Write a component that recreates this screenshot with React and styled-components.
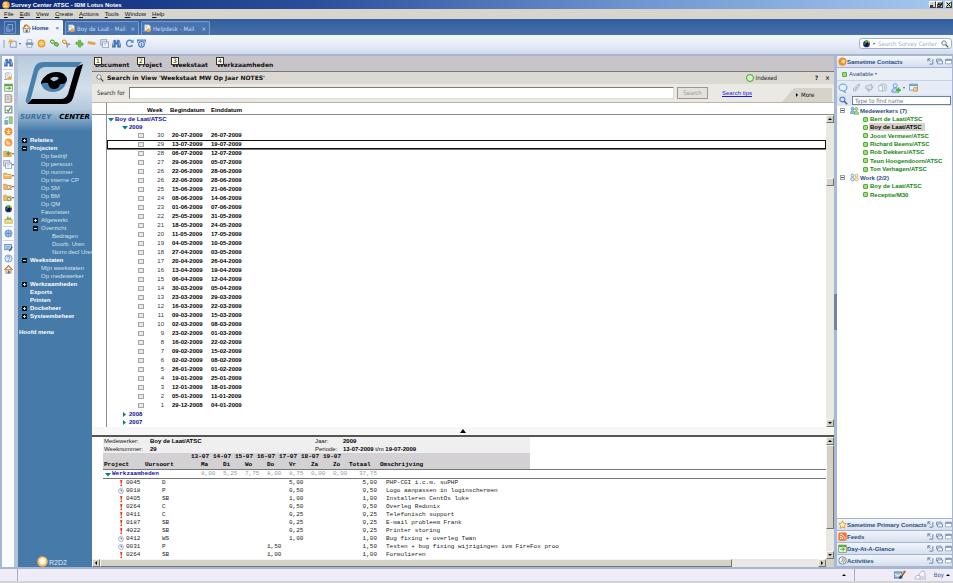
import React from 'react';
import styled, { createGlobalStyle } from 'styled-components';

const GlobalStyle = createGlobalStyle`
  * { box-sizing: border-box; }
  html, body, #root { height: 100%; }
  body {
    margin: 0;
    overflow: hidden;
    font-family: 'DejaVu Sans Condensed', 'DejaVu Sans', sans-serif;
    font-size: 6px;
    line-height: 8px;
    color: #222;
  }
  button, input {
    font: inherit;
    color: inherit;
    margin: 0;
    padding: 0;
    border: 0;
    background: none;
  }
  button { cursor: pointer; white-space: nowrap; }
  a { color: inherit; text-decoration: none; }
  svg { display: block; flex: none; }
  ul { list-style: none; margin: 0; padding: 0; }
  table { border-collapse: collapse; border-spacing: 0; }
  td, th { padding: 0; white-space: nowrap; text-align: left; }
`;

const ARIAL = "'Liberation Sans', Arial, sans-serif";
const MONO = "'Liberation Mono', 'Courier New', monospace";
const WIDE = "'DejaVu Sans', Verdana, sans-serif";

/* ---------- icons ---------- */

const ICONS = {
  notes: (
    <>
      <circle cx="6" cy="6" r="5.6" fill="#f39a1f" />
      <circle cx="5" cy="4.5" r="3" fill="#ffd27a" />
      <path d="M2 8q4 2 8-1" stroke="#fff" strokeWidth="1.2" fill="none" />
    </>
  ),
  window: (
    <>
      <rect x="3" y="1" width="7" height="8" fill="none" stroke="#a9c3e6" />
      <path d="M1 4v7h6" fill="none" stroke="#a9c3e6" />
    </>
  ),
  home: (
    <>
      <path d="M2 6h8v5H2z" fill="#d9e4f4" stroke="#5b7fb5" strokeWidth=".8" />
      <path d="M.5 6.5L6 1l5.5 5.5" fill="none" stroke="#e88a1c" strokeWidth="1.8" />
      <rect x="5" y="7.5" width="2.5" height="3.5" fill="#9a5b20" />
      <path d="M3 1h1.5v3H3z" fill="#b8642c" />
    </>
  ),
  mail: (
    <>
      <path d="M2 1h6l2 2v6H2z" fill="#f5f8fc" stroke="#8ba3c7" strokeWidth=".8" />
      <path d="M3 3h4M3 5h3" stroke="#9bb1d0" strokeWidth=".8" />
      <path d="M7.5 4.500l1.200 2 2.300.5-1.500 1.700.2 2.300-2.200-1-2.200 1 .2-2.300L4 7l2.300-.5z" fill="#f7a823" />
      <path d="M0 10h5" stroke="#7d97c0" />
    </>
  ),
  create: (
    <>
      <path d="M3 3h8v8H3z" fill="#e3ecf9" stroke="#6287bd" strokeWidth="1" />
      <path d="M3.5 0v7M0 3.5h7M1 1l5 5M6 1L1 6" stroke="#f5a623" strokeWidth="1.1" />
    </>
  ),
  print: (
    <>
      <path d="M3 1h6v4H3z" fill="#fff" stroke="#6c84a8" strokeWidth=".8" />
      <rect x="1" y="4.5" width="10" height="4" rx="1" fill="#7f96b9" />
      <path d="M3 7.5h6V11H3z" fill="#fff" stroke="#6c84a8" strokeWidth=".8" />
    </>
  ),
  gear: (
    <>
      <circle cx="6" cy="6" r="4.2" fill="#ffd58a" stroke="#f09a22" strokeWidth="2" />
      <circle cx="6" cy="6" r="1.5" fill="#fff" stroke="#d98618" strokeWidth=".6" />
    </>
  ),
  linkGreen: (
    <>
      <rect x="1" y="1.5" width="5" height="4" rx="1.8" fill="#e2f3d3" stroke="#5d9c3b" strokeWidth="1.4" transform="rotate(30 3 3)" />
      <rect x="5.5" y="5" width="5" height="4" rx="1.8" fill="#9bd070" stroke="#4b9a36" strokeWidth="1.4" transform="rotate(30 8 8)" />
    </>
  ),
  linkOrange: (
    <>
      <rect x="1" y="1.5" width="5" height="4" rx="1.8" fill="#fbe3b6" stroke="#d8902a" strokeWidth="1.2" transform="rotate(30 3 3)" />
      <path d="M5.5 5l5.5 2-3 1-1 3.500z" fill="#f3a63f" stroke="#6f86ab" strokeWidth=".8" />
    </>
  ),
  plus: <path d="M4.500 1.500L8 2v2.500l3 1L10.500 8.500H8L7.500 11 4.500 10.500V8L1 7l.5-3h3z" fill="#6bbd45" stroke="#4b9c33" strokeWidth=".6" />,
  minus: <rect x="1" y="4" width="10" height="3" rx="1" fill="#f0a63a" stroke="#ce9a50" strokeWidth=".6" transform="rotate(8 6 6)" />,
  pages: (
    <>
      <rect x="1" y="1" width="8" height="7" fill="#dfe7f3" stroke="#7c91b4" />
      <rect x="3.5" y="4" width="8" height="7" fill="#fff" stroke="#7c91b4" />
      <path d="M5 6h5M5 8h4" stroke="#96a8c6" strokeWidth=".8" />
    </>
  ),
  bino: (
    <>
      <path d="M2.5 1.500h2.500v3h2v-3h2.500L11.500 8v3H7.500V7h-3v4H.5V8z" fill="#3f74bd" stroke="#2a579b" strokeWidth=".6" />
      <path d="M2.5 4L1.500 9M9 4l1.500 5" stroke="#b8d3f2" strokeWidth="1" />
    </>
  ),
  refresh: (
    <>
      <path d="M10 8a4.300 4.300 0 1 1-.5-5" fill="none" stroke="#5589cd" strokeWidth="2" />
      <path d="M7 5h4.500V.5z" fill="#5589cd" />
    </>
  ),
  world: (
    <>
      <circle cx="6" cy="6" r="4.800" fill="#a9c6ec" stroke="#5f8bc8" strokeWidth="1" />
      <path d="M1.500 6h9M6 1.500v9M3 2.500q3 3.500 0 7M9 2.500q-3 3.500 0 7" fill="none" stroke="#4d7fc4" strokeWidth=".7" />
    </>
  ),
  help: (
    <>
      <circle cx="6" cy="6" r="4.800" fill="#dceafa" stroke="#6f9bd4" strokeWidth="1.200" />
      <path d="M4.500 4.500q0-1.500 1.500-1.500t1.500 1.500T6 7M6 8.200v1.200" fill="none" stroke="#4d7fc4" strokeWidth="1.200" />
    </>
  ),
  replace: (
    <>
      <path d="M0 1.500h12M1 1v4M11 1v4" stroke="#4d7fc4" strokeWidth="1.400" />
      <circle cx="6" cy="7" r="3.800" fill="#d8e7f8" stroke="#4478be" strokeWidth="1.400" />
      <path d="M6 5v4M4.500 7.500L6 9l1.500-1.500" stroke="#4478be" fill="none" />
    </>
  ),
  calendar: (
    <>
      <rect x="1" y="1.500" width="10" height="9.500" fill="#f4faf0" stroke="#5b8f4c" />
      <rect x="1" y="1.500" width="10" height="2.800" fill="#5fa548" />
      <path d="M3 7h5M6 5l3 2-3 2" stroke="#4c9a38" strokeWidth="1.300" fill="none" />
    </>
  ),
  book: (
    <>
      <rect x="1.500" y="1" width="8" height="10" fill="#e4e2dc" stroke="#84827c" />
      <path d="M3.500 3.500h4M3.500 5.500h4M3.500 7.500h4" stroke="#8d9bb0" strokeWidth=".8" />
      <path d="M10.500 2v2M10.500 5v2M10.500 8v2" stroke="#c98d36" strokeWidth="1.400" />
    </>
  ),
  todo: (
    <>
      <rect x="1.500" y="1.500" width="9" height="9" fill="#fff" stroke="#5b6f8d" strokeWidth="1.200" />
      <path d="M3.500 6l2 2.500L9 3.500" fill="none" stroke="#45a030" strokeWidth="1.600" />
    </>
  ),
  replicate: (
    <>
      <path d="M1 6h4v5H1z" fill="#77b4ea" stroke="#4380bd" strokeWidth=".7" />
      <path d="M7 1h4v9H7z" fill="#a2d584" stroke="#52953a" strokeWidth=".7" />
      <path d="M2 4q0-3 4-2.500" fill="none" stroke="#4380bd" />
    </>
  ),
  people: (
    <>
      <circle cx="6" cy="6" r="5.300" fill="#f3922b" />
      <path d="M6 3v6M3 5l3 1.500L9 5M4 9.500l2-2.500 2 2.500" stroke="#ffe9cf" strokeWidth="1.200" fill="none" />
    </>
  ),
  pencilBall: (
    <>
      <circle cx="6" cy="6" r="5.300" fill="#f5a042" />
      <path d="M3 3.500l5 5M3 6l3 3" stroke="#ffe9cf" strokeWidth="1.400" />
    </>
  ),
  folder: (
    <>
      <path d="M1 3h4l1 1.500h5V10H1z" fill="#f3b95b" stroke="#c58c2e" strokeWidth=".8" />
      <path d="M1.500 6h9" stroke="#fde2ad" />
    </>
  ),
  folderGreen: (
    <>
      <path d="M1 3h4l1 1.500h5V10H1z" fill="#f3b95b" stroke="#c58c2e" strokeWidth=".8" />
      <path d="M7 3v6M4.500 6h5" stroke="#4ba437" strokeWidth="2" />
    </>
  ),
  folderUser: (
    <>
      <path d="M1 3h4l1 1.500h5V10H1z" fill="#f3b95b" stroke="#c58c2e" strokeWidth=".8" />
      <circle cx="7.500" cy="7" r="2" fill="#fff" stroke="#777" strokeWidth=".8" />
    </>
  ),
  folderSync: (
    <>
      <path d="M1 3h4l1 1.500h5V10H1z" fill="#f3b95b" stroke="#c58c2e" strokeWidth=".8" />
      <circle cx="8" cy="8" r="2.500" fill="#bfe3a4" stroke="#4f9c3a" strokeWidth=".9" />
    </>
  ),
  ball: (
    <>
      <circle cx="6" cy="6.500" r="4.500" fill="#1c2f86" />
      <path d="M2 9q5 2 8-4l-2-2z" fill="#15161c" />
      <path d="M3 3l4-2 1 3-3 2z" fill="#4fb637" />
      <path d="M8 1.500l3 3-2.500 1z" fill="#f0c21c" />
      <path d="M2 5l3 1-2 3z" fill="#2f60d0" />
      <path d="M8.500 6l2 .5-1.500 2z" fill="#e14b2c" />
    </>
  ),
  tray: (
    <>
      <path d="M1 6h10v5H1z" fill="#f3e17c" stroke="#a8953a" strokeWidth=".8" />
      <path d="M3 6l2-4 2 3 2-2v3" fill="#7eb55d" stroke="#5b8c40" strokeWidth=".6" />
    </>
  ),
  edit: (
    <>
      <rect x="1" y="2" width="9" height="7" fill="#bcd5f2" stroke="#4f79b5" />
      <path d="M3 5h5M3 7h3" stroke="#4f79b5" strokeWidth=".8" />
      <path d="M11 5l-4 6" stroke="#444" strokeWidth="1.500" />
    </>
  ),
  write: (
    <>
      <rect x="0" y="3" width="8" height="6" fill="#9cc1ec" stroke="#4f79b5" />
      <path d="M1 5l3 2 3-2" fill="none" stroke="#fff" />
      <path d="M11 2L5.500 9.500" stroke="#3b342a" strokeWidth="2" />
      <path d="M10.500 2L7 6.500" stroke="#e0a53c" strokeWidth="1.300" />
    </>
  ),
  house: (
    <>
      <path d="M2.500 6h7v5h-7z" fill="#f6e2bf" stroke="#96683a" strokeWidth=".8" />
      <path d="M.5 6.500L6 1l5.500 5.500" fill="none" stroke="#c4702a" strokeWidth="1.600" />
      <rect x="5" y="7.500" width="2.500" height="3.500" fill="#3e68a8" />
    </>
  ),
  search: (
    <>
      <circle cx="4.500" cy="4.500" r="3.300" fill="#f4f8fd" stroke="#666" strokeWidth="1.200" />
      <path d="M7 7l4 4" stroke="#444" strokeWidth="1.800" />
    </>
  ),
  searchBlue: (
    <>
      <circle cx="4.500" cy="4.500" r="3.300" fill="#cfe4fa" stroke="#4c7db8" strokeWidth="1.400" />
      <path d="M7 7l4 4" stroke="#3c5f94" strokeWidth="2" />
    </>
  ),
  sametime: (
    <>
      <circle cx="6" cy="6" r="5.500" fill="#f58a1f" />
      <circle cx="7" cy="6" r="2.600" fill="#ffd9a8" />
      <path d="M1 10l1.500-3 2 2z" fill="#f58a1f" />
    </>
  ),
  chat: <path d="M6 1.200c6 0 6 7.800 1.500 7.800L9 11.500 5 9C-.5 9 0 1.200 6 1.200z" fill="#e4f0fc" stroke="#5b92cf" strokeWidth="1.200" />,
  clip: <path d="M9 3L4 8q-1 1.500.5 1.500L10 4q1-3-2-2.500L2 7.500Q1 11 4 11l4-3.500" fill="none" stroke="#a5aebb" strokeWidth="1.100" />,
  horn: <path d="M1 4.500L9 1.500v7.500L1 7.500zM3 8l1 3h2l-1-2.500M10.500 4v3" fill="#dde2ea" stroke="#9ea9ba" strokeWidth="1" />,
  card: (
    <>
      <rect x="3" y="1.500" width="8" height="9" rx="2" fill="#e8ecf3" stroke="#9fadc3" />
      <path d="M1 3.500h5v7H1z" fill="#f7f9fc" stroke="#9fadc3" />
      <path d="M8.500 3.500v5" stroke="#9fadc3" />
    </>
  ),
  userAdd: (
    <>
      <circle cx="5" cy="3.200" r="2.400" fill="#dcebfb" stroke="#5b92cf" />
      <path d="M1 11q0-5 4-5t4 5z" fill="#b7d5f4" stroke="#5b92cf" />
      <path d="M9 5.500v6M6 8.500h6" stroke="#4fae37" strokeWidth="2" />
    </>
  ),
  sheet: (
    <>
      <rect x="1" y="1.500" width="10" height="8" fill="#f3f7fc" stroke="#5e83b9" />
      <path d="M1 3h10" stroke="#5e83b9" strokeWidth="1.600" />
      <path d="M6 6h5v5H6z" fill="#f6cc77" stroke="#b98b35" strokeWidth=".8" />
    </>
  ),
  group: (
    <>
      <circle cx="3.500" cy="3.500" r="2" fill="#8fc0ee" stroke="#3d78bd" strokeWidth=".7" />
      <path d="M.5 10q0-4 3-4t3 4z" fill="#8fc0ee" stroke="#3d78bd" strokeWidth=".7" />
      <circle cx="8.500" cy="4" r="2" fill="#a9dd8b" stroke="#4c9a38" strokeWidth=".7" />
      <path d="M5.500 11q0-4 3-4t3 4z" fill="#a9dd8b" stroke="#4c9a38" strokeWidth=".7" />
    </>
  ),
  groupWork: (
    <>
      <circle cx="3.300" cy="3.500" r="2" fill="#e3f0fc" stroke="#4a84c8" strokeWidth=".9" />
      <rect x="1" y="6.200" width="4.500" height="4.300" rx="2" fill="#e3f0fc" stroke="#4a84c8" strokeWidth=".9" />
      <circle cx="8.700" cy="3.500" r="2" fill="#fdeccb" stroke="#e0982c" strokeWidth=".9" />
      <rect x="6.500" y="6.200" width="4.500" height="4.300" rx="2" fill="#fdeccb" stroke="#e0982c" strokeWidth=".9" />
    </>
  ),
  star: <path d="M6 1l1.500 3.300 3.500.5-2.600 2.500.7 3.700L6 9.200 2.900 11l.7-3.700L1 4.800l3.500-.5z" fill="#fdf0c8" stroke="#e79a25" strokeWidth="1.200" />,
  feed: (
    <>
      <rect x=".5" y=".5" width="11" height="11" rx="1.500" fill="#f0742a" />
      <circle cx="3.500" cy="8.700" r="1.100" fill="#fff" />
      <path d="M2.500 5.500a4 4 0 0 1 4 4M2.500 2.800a7 7 0 0 1 7 7" fill="none" stroke="#fff" strokeWidth="1.200" />
    </>
  ),
  activity: (
    <>
      <circle cx="6" cy="6" r="5" fill="#eaf3fd" stroke="#4b86cc" strokeWidth="1.200" />
      <path d="M6 6V2.500a3.500 3.500 0 0 1 1 6.500z" fill="#f6c343" stroke="#c9922a" strokeWidth=".6" />
      <path d="M6 6L3.500 8.500" stroke="#4b86cc" />
    </>
  ),
  undock: <path d="M1.500 6V1.500H6M1.500 1.500l4.500 4.500M4 10.500h6V2" fill="none" stroke="#53709c" strokeWidth="1.400" />,
  stack: (
    <>
      <path d="M1 2h8v5H1z" fill="#e7eef9" stroke="#53709c" strokeWidth="1.200" />
      <path d="M3 5h8v5H3z" fill="#fff" stroke="#53709c" strokeWidth="1.200" />
    </>
  ),
  panel: (
    <>
      <path d="M1 2h10v8H1z" fill="#fff" stroke="#7a97c3" strokeWidth="1.200" />
      <path d="M1 3.500h10" stroke="#53709c" strokeWidth="2" />
    </>
  ),
  clock: (
    <>
      <circle cx="6" cy="6" r="5" fill="#f1f4fa" stroke="#8f99b3" strokeWidth="1.300" />
      <path d="M6 2.500V6h2.500" fill="none" stroke="#44547c" strokeWidth="1.300" />
    </>
  ),
  alert: <path d="M4.500 0h4L7.500 7.500h-2zM5 9h3v3H5z" fill="#ec2a15" />,
  server: (
    <>
      <circle cx="6" cy="6" r="5.700" fill="#f7b758" />
      <circle cx="6" cy="5.500" r="4" fill="#fde3b4" />
      <path d="M6 2l3 3.500H8V9H4V5.500H3z" fill="#fff" />
    </>
  ),
  cloud: (
    <>
      <path d="M5 8V5l3-3h2l1 3v3z" fill="#f7f7fa" stroke="#b9bdc9" strokeWidth="1" />
      <path d="M1 10V8l2-1.500h3V10z" fill="#f7f7fa" stroke="#b9bdc9" strokeWidth="1" />
      <path d="M6 10h6V8" fill="none" stroke="#b9bdc9" />
    </>
  ),
};

const Icon = ({ name, size = 9 }) => (
  <svg width={size} height={size} viewBox="0 0 12 12" aria-hidden="true">{ICONS[name]}</svg>
);

const Twisty = ({ open }) => (
  <svg width="6" height="5" viewBox="0 0 6 5" aria-hidden="true">
    <path d={open ? 'M0 1h6L3 4.500z' : 'M1 0v5l3-2.500z'} fill="#087f7b" />
  </svg>
);

const Caret = styled.span`
  width: 0;
  height: 0;
  border: 1px solid transparent;
  border-top: 2px solid #44597e;
  border-bottom: 0;
`;

/* ---------- window frame ---------- */

const Window = styled.div`
  display: flex;
  flex-direction: column;
  height: 100vh;
  background: #efedf8;
`;

const TitleBar = styled.header`
  display: flex;
  align-items: center;
  height: 9px;
  padding: 0 1px 0 2px;
  background: linear-gradient(90deg, #0c2a78, #2b4f9c 33%, #6f96d0 67%, #a6caf0);
  color: #fff;
`;

const TitleText = styled.h1`
  flex: 1;
  margin: 0 0 0 1px;
  font: bold 6px/8px ${ARIAL};
`;

const WindowButton = styled.button`
  width: 7px;
  height: 7px;
  border: 1px solid;
  border-color: #fff #404040 #404040 #fff;
  background: #d4d0c8;
  color: #000;
  display: grid;
  place-items: center;
  margin-left: ${(p) => (p.$gap ? '2px' : 0)};
`;

const MenuBar = styled.nav`
  display: flex;
  align-items: center;
  gap: 6px;
  height: 10px;
  padding-left: 4px;
  background: #d8d5cd;
  font-family: ${ARIAL};
  color: #111;
`;

const TabBar = styled.nav`
  display: flex;
  align-items: flex-end;
  gap: 2px;
  height: 16px;
  padding-left: 4px;
  background: linear-gradient(#335c9b, #4470ac);
`;

const WindowTab = styled.button`
  width: 12px;
  height: 13px;
  margin: 0 2px 1px 0;
  border: 1px solid #6f92c4;
  display: grid;
  place-items: center;
`;

const Tab = styled.div`
  display: flex;
  align-items: center;
  justify-content: space-between;
  width: ${(p) => p.$width}px;
  height: ${(p) => (p.$active ? 15 : 14)}px;
  padding: 0 3px 0 1px;
  border-radius: 2px 2px 0 0;
  border: 1px solid ${(p) => (p.$active ? '#f4f7fc' : '#7b9bcb')};
  border-bottom: 0;
  background: ${(p) => (p.$active ? '#f0f4fb' : '#4a74b0')};
  color: ${(p) => (p.$active ? '#1e3f78' : '#c9daf2')};
  font-family: ${(p) => (p.$active ? ARIAL : 'inherit')};
  font-weight: ${(p) => (p.$active ? 'bold' : 'normal')};
`;

const TabButton = styled.button`
  display: flex;
  align-items: center;
  gap: 1px;
`;

const TabClose = styled.button`
  font-weight: normal;
`;

const ToolBar = styled.div`
  display: flex;
  align-items: center;
  height: 19px;
  padding: 0 1px 2px 3px;
  background: linear-gradient(#f4f7fc, #e3e9f5 60%, #d3dcec);
`;

const Grip = styled.span`
  width: 2px;
  height: 8px;
  margin-right: 3px;
  background: #b9c5dc;
`;

const ToolGroup = styled.div`
  display: flex;
  align-items: center;
  justify-content: space-between;
  width: 121px;
  margin-left: 4px;
`;

const IconButton = styled.button`
  display: flex;
  align-items: center;
  gap: 2px;
`;

const GlobalSearch = styled.form`
  display: flex;
  align-items: center;
  gap: 3px;
  width: 93px;
  height: 11px;
  margin-left: auto;
  padding: 0 2px;
  border: 1px solid #9fb0cf;
  border-radius: 3px;
  background: #fff;

  input {
    flex: 1;
    min-width: 0;
    outline: none;
  }
  input::placeholder { color: #a9adb5; }
`;

const Body = styled.div`
  flex: 1;
  min-height: 0;
  display: flex;
  border: solid #a8b6cf;
  border-width: 2px 1px 2px 2px;
`;

/* ---------- left side ---------- */

const Rail = styled.nav`
  display: flex;
  flex-direction: column;
  gap: 2px;
  width: 16px;
  padding: 2px 0 0 1px;
  background: #fbfcfe;
  border-right: 4px solid #b4c2da;
`;

const RailButton = styled.button`
  display: flex;
  align-items: center;
  height: 9px;
  margin-left: ${(p) => (p.$menu ? 0 : '1px')};
`;

const RailRule = styled.hr`
  width: 10px;
  height: 1px;
  margin: 0;
  border: 0;
  background: #c9d3e4;
`;

const Sidebar = styled.aside`
  display: flex;
  flex-direction: column;
  width: 74px;
  overflow: hidden;
  background: #457aa9;
  color: #e4edf5;
  font-family: ${ARIAL};
`;

const Brand = styled.div`
  height: 80px;
  padding-top: 5px;
  background: linear-gradient(#b9cbdc, #d3dfea 40%, #b4cadd 66%, #457aa9 94%);

  svg { margin: 0 auto; }
`;

const BrandName = styled.div`
  display: flex;
  justify-content: space-between;
  padding: 0 2px;
  font: italic bold 7px/10px ${WIDE};
  color: #000;

  span:first-child { color: #39719f; }
`;

const TreeItem = styled.li`
  display: flex;
  align-items: center;
  height: 8px;
  padding-left: ${(p) => 4 + p.$level * 11}px;
  white-space: nowrap;
  font-weight: ${(p) => (p.$level === 0 ? 'bold' : 'normal')};
  color: ${(p) => (p.$level === 0 ? '#fff' : '#d5e2ee')};
`;

const Expander = styled.button`
  flex: none;
  width: 5px;
  height: 5px;
  margin-right: 3px;
  visibility: ${(p) => (p.$shown ? 'visible' : 'hidden')};
  background:
    linear-gradient(#c8d6e4, #c8d6e4) center / 3px 1px no-repeat,
    ${(p) => (p.$open ? '' : 'linear-gradient(#c8d6e4, #c8d6e4) center / 1px 3px no-repeat,')}
    #111;
`;

const MainMenuLink = styled.a`
  margin: 8px 0 0 1px;
  color: #fff;
  font-weight: bold;
`;

const Server = styled.div`
  display: flex;
  align-items: flex-end;
  gap: 1px;
  margin-top: auto;
  padding-left: 19px;
  font-size: 7px;
`;

/* ---------- main area ---------- */

const Main = styled.main`
  flex: 1;
  min-width: 0;
  display: flex;
  flex-direction: column;
  background: #fff;
`;

const ActionBar = styled.div`
  display: flex;
  gap: 9px;
  height: 16px;
  padding: 4px 0 0 3px;
  background: #c7c5c8;
  border-bottom: 1px solid #777;
`;

const Action = styled.button`
  position: relative;
  height: 9px;
  width: ${(p) => p.$width}px;
  text-align: left;
  font-family: ${WIDE};
  font-weight: bold;
  color: #111;
`;

const KeyTip = styled.span`
  position: absolute;
  left: -1px;
  top: -3px;
  width: 8px;
  height: 8px;
  border: 1px solid #333;
  background: #ffffe1;
  color: #222;
  font-weight: normal;
  line-height: 6px;
  text-align: center;
`;

const SearchTitle = styled.div`
  display: flex;
  align-items: center;
  height: 12px;
  padding: 0 4px;
  background: #dbd9d2;
  color: #111;

  h2 {
    flex: 1;
    margin: 0 0 0 3px;
    font: bold 6px/8px ${WIDE};
  }
`;

const Indexed = styled.span`
  display: flex;
  align-items: center;
  gap: 2px;
  margin-right: 37px;

  &::before {
    content: '';
    width: 6px;
    height: 6px;
    border: 1px solid #3ca52a;
    border-radius: 50%;
    background: #d5f5c6;
  }
`;

const TitleAction = styled.button`
  width: 5px;
  margin-left: 6px;
  font-weight: bold;
`;

const SearchRow = styled.form`
  display: flex;
  align-items: center;
  height: 19px;
  padding: 0 2px 0 5px;
  background: #ebe9e4;
  border-bottom: 1px solid #b9b5aa;

  input {
    flex: 1;
    min-width: 0;
    height: 12px;
    margin-left: 4px;
    border: 1px solid #7d7b75;
    border-right-color: #ddd;
    border-bottom-color: #ddd;
    background: #fff;
  }
  a {
    width: 60px;
    color: #1a1ae0;
    font-family: ${ARIAL};
    text-decoration: underline;
  }
`;

const SearchButton = styled.button`
  width: 31px;
  height: 12px;
  margin: 0 14px 0 3px;
  border: 1px solid #9b988f;
  background: #e4e2db;
  color: #9a978f;
`;

const More = styled.button`
  align-self: flex-end;
  display: flex;
  align-items: center;
  gap: 2px;
  width: 50px;
  height: 14px;
  padding-left: 13px;
  background: #d6d3cb;
  clip-path: polygon(12px 0, 100% 0, 100% 100%, 0 100%);
  color: #111;
`;

const ViewPane = styled.section`
  flex: 1;
  min-height: 0;
  display: flex;
  flex-direction: column;
  font-family: ${ARIAL};
`;

const ViewHead = styled.div`
  display: flex;
  height: 12px;
  border-bottom: 1px solid #8b8b8b;
`;

const Gutter = styled.div`
  width: 15px;
  border-right: 1px solid #8b8b8b;
`;

const PaneScroll = styled.div`
  flex: 1;
  min-height: 0;
  display: flex;
`;

const Clip = styled.div`
  flex: 1;
  min-width: 0;
  overflow: hidden;
`;

const WeekTable = styled.table`
  width: 100%;
  table-layout: fixed;
  color: #000;

  th { padding: 2px 0 0; height: 11px; line-height: 8px; }
`;

const HeadCell = styled.th`
  && { padding-left: ${(p) => p.$pad || 0}px; }
`;

const WeekRow = styled.tr`
  font-weight: bold;
  outline: ${(p) => (p.$selected ? '1px solid #111' : 'none')};
  outline-offset: -1px;
  box-shadow: ${(p) => (p.$selected ? '0 1px 0 #777' : 'none')};

  td { height: 9px; line-height: 9px; }
  td:nth-child(2) { text-align: right; font-weight: normal; color: #333; }
  td:nth-child(3) { padding-left: 8px; }
`;

const DocMark = styled.span`
  display: block;
  width: 6px;
  height: 5px;
  margin-left: 31px;
  border: 1px solid #a5a5a5;
  background: #e9e9e9;
`;

const Category = styled.button`
  display: flex;
  align-items: center;
  gap: 1px;
  height: 8px;
  padding-left: ${(p) => p.$indent}px;
  font-weight: bold;
  color: #1010a0;
`;

const ScrollTrack = styled.div`
  display: flex;
  flex-direction: ${(p) => (p.$horizontal ? 'row' : 'column')};
  ${(p) => (p.$horizontal ? 'height: 8px; flex: 1;' : 'width: 8px;')}
  background: #e9e8e4;
`;

const ScrollPart = styled.span`
  flex: ${(p) => p.$grow || 'none'};
  width: ${(p) => (p.$grow && p.$wide ? 'auto' : '8px')};
  min-height: 8px;
  border: 1px solid;
  border-color: #f7f6f3 #77746d #77746d #f7f6f3;
  background: #d4d1c9;
  display: grid;
  place-items: center;
`;

const Space = styled.span`
  flex: ${(p) => p.$grow};
`;

const PreviewHandle = styled.button`
  display: grid;
  place-items: center;
  width: 100%;
  height: 10px;
  background: #f7f7f7;
  border-bottom: 2px solid #555;
`;

const Preview = styled.section`
  display: flex;
  flex-direction: column;
  height: 130px;
`;

const Facts = styled.dl`
  display: grid;
  grid-template-columns: 46px 165px 28px 1fr;
  width: 427px;
  margin: 0 0 0 11px;
  padding-left: 1px;
  background: #efefef;
  font-family: ${ARIAL};
  color: #222;

  dd { margin: 0; font-weight: bold; color: #000; }
  dd span { font-weight: normal; }
`;

const HourTable = styled.table`
  width: calc(100% - 11px);
  margin-left: 11px;
  table-layout: fixed;
  font-family: ${MONO};
  color: #222;

  th, td { height: 8px; line-height: 8px; }
  thead th { background: #d3d1d4; color: #000; }
  thead th:last-child { background: #fff; }
`;

const HourHead = styled.th`
  padding-left: ${(p) => p.$pad || 0}px;
`;

const HourCell = styled.td`
  padding-left: ${(p) => p.$pad || 0}px;
  text-align: ${(p) => (p.$right ? 'right' : 'left')};
`;

const SumRow = styled.tr`
  border-top: 1px solid #777;
  border-bottom: 1px solid #777;
  color: #999;
`;

const ProjectCell = styled.span`
  display: flex;
  align-items: center;
  gap: 2px;
  padding-left: 15px;
`;

const BottomScroll = styled.div`
  display: flex;
  height: 8px;
  background: #d4d1c9;
`;

const Corner = styled.div`
  width: 8px;
`;

const Splitter = styled.div`
  display: flex;
  flex-direction: column;
  width: 3px;
  background: #a9b8d5;
`;

const SplitGrip = styled.span`
  height: 36px;
  background: #73829f;
`;

/* ---------- contacts ---------- */

const Contacts = styled.aside`
  display: flex;
  flex-direction: column;
  width: 115px;
  background: #fff;
  color: #2a4d80;
  font-family: ${ARIAL};
`;

const PanelHead = styled.div`
  display: flex;
  align-items: center;
  height: 12px;
  padding: 0 0 0 1px;
  border-bottom: 1px solid #a4b5d3;
  background: linear-gradient(#f2f5fb, #d7dfee);
  white-space: nowrap;
  font-weight: bold;

  h3 { flex: 1; margin: 0; font-size: 6px; line-height: 8px; }
`;

const PanelTools = styled.span`
  display: flex;
  gap: 2px;
`;

const StatusMenu = styled.button`
  display: flex;
  align-items: center;
  gap: 2px;
  height: 12px;
  padding-left: 5px;
  background: #e9eef7;
`;

const Dot = styled.span`
  flex: none;
  width: 5px;
  height: 5px;
  border: 1px solid #55ad38;
  border-radius: 1px;
  background: #9be07b;
`;

const ContactTools = styled.div`
  display: flex;
  align-items: center;
  gap: 4px;
  height: 14px;
  padding-left: 1px;
  border-top: 1px solid #c6d1e4;
  background: #e6ecf6;
`;

const FindRow = styled.div`
  display: flex;
  align-items: center;
  gap: 4px;
  height: 12px;
  padding: 0 1px 0 2px;
  background: #dfe6f2;
  font-family: 'DejaVu Sans Condensed', 'DejaVu Sans', sans-serif;

  input {
    flex: 1;
    min-width: 0;
    height: 9px;
    padding-left: 2px;
    border: 1px solid #6d7f9d;
    background: #fff;
  }
  input::placeholder { color: #6d7887; }
`;

const ContactTree = styled.ul`
  display: grid;
  grid-auto-rows: 1fr;
  height: 93px;
  font-weight: bold;
`;

const ContactGroup = styled.li`
  display: flex;
  align-items: center;
  gap: 1px;
  padding-left: 3px;
  white-space: nowrap;
`;

const Fold = styled.button`
  width: 5px;
  height: 5px;
  margin-right: 4px;
  border: 1px solid #9aa3b3;
  background: linear-gradient(#555, #555) center / 3px 1px no-repeat;
`;

const Contact = styled.li`
  display: flex;
  align-items: center;
  gap: 1px;
  padding-left: 26px;
  white-space: nowrap;
  color: #14860c;

  a {
    padding: 0 3px 0 1px;
    line-height: 8px;
    background: ${(p) => (p.$selected ? '#d4d1c9' : 'none')};
    color: ${(p) => (p.$selected ? '#000' : 'inherit')};
  }
`;

const PanelStack = styled.div`
  margin-top: auto;
  border-top: 1px solid #a4b5d3;
`;

const StatusBar = styled.footer`
  display: flex;
  align-items: center;
  justify-content: flex-end;
  gap: 8px;
  height: 14px;
  padding-right: 3px;
  background: #efecf8;
  border-bottom: 2px solid #d3d3d3;
  color: #34568c;
`;

const StatusRule = styled.span`
  width: 1px;
  height: 12px;
  margin-right: ${(p) => (p.$left ? 'auto' : '31px')};
  margin-left: ${(p) => (p.$left ? '17px' : 0)};
  background: #a9adbd;
`;

/* ---------- data ---------- */

const menus = ['File', 'Edit', 'View', 'Create', 'Actions', 'Tools', 'Window', 'Help'];

const tools = ['print', 'gear', 'linkGreen', 'linkOrange', 'plus', 'minus', 'pages', 'bino', 'refresh', 'replace'];

const rail = [
  ['mail'], ['calendar'], ['book'], ['todo'], ['replicate'], ['people'], ['pencilBall'],
  ['folderGreen', true], ['pages', true], ['folder', true], ['folderUser', true],
  ['folderSync', true], ['ball'], ['tray'],
];

// [level, label, expander state]
const tree = [
  [0, 'Relaties', 'closed'],
  [0, 'Projecten', 'open'],
  [1, 'Op bedrijf'],
  [1, 'Op persoon'],
  [1, 'Op nummer'],
  [1, 'Op interne CP'],
  [1, 'Op SM'],
  [1, 'Op BM'],
  [1, 'Op QM'],
  [1, 'Favorieten'],
  [1, 'Afgewerkt', 'closed'],
  [1, 'Overzicht', 'open'],
  [2, 'Bedragen'],
  [2, 'Doorb. Uren'],
  [2, 'Norm decl Uren'],
  [0, 'Weekstaten', 'open'],
  [1, 'Mijn weekstaten'],
  [1, 'Op medewerker'],
  [0, 'Werkzaamheden', 'closed'],
  [0, 'Exports'],
  [0, 'Printen'],
  [0, 'Docbeheer', 'closed'],
  [0, 'Systeembeheer', 'closed'],
];

const actions = [['Document', 34], ['Project', 25], ['Weekstaat', 36], ['Werkzaamheden', 56]];

const weeks = [
  [30, '20-07-2009', '26-07-2009'],
  [29, '13-07-2009', '19-07-2009'],
  [28, '06-07-2009', '12-07-2009'],
  [27, '29-06-2009', '05-07-2009'],
  [26, '22-06-2009', '28-06-2009'],
  [26, '22-06-2009', '28-06-2009'],
  [25, '15-06-2009', '21-06-2009'],
  [24, '08-06-2009', '14-06-2009'],
  [23, '01-06-2009', '07-06-2009'],
  [22, '25-05-2009', '31-05-2009'],
  [21, '18-05-2009', '24-05-2009'],
  [20, '11-05-2009', '17-05-2009'],
  [19, '04-05-2009', '10-05-2009'],
  [18, '27-04-2009', '03-05-2009'],
  [17, '20-04-2009', '26-04-2009'],
  [16, '13-04-2009', '19-04-2009'],
  [15, '06-04-2009', '12-04-2009'],
  [14, '30-03-2009', '05-04-2009'],
  [13, '23-03-2009', '29-03-2009'],
  [12, '16-03-2009', '22-03-2009'],
  [11, '09-03-2009', '15-03-2009'],
  [10, '02-03-2009', '08-03-2009'],
  [9, '23-02-2009', '01-03-2009'],
  [8, '16-02-2009', '22-02-2009'],
  [7, '09-02-2009', '15-02-2009'],
  [6, '02-02-2009', '08-02-2009'],
  [5, '26-01-2009', '01-02-2009'],
  [4, '19-01-2009', '25-01-2009'],
  [3, '12-01-2009', '18-01-2009'],
  [2, '05-01-2009', '11-01-2009'],
  [1, '29-12-2008', '04-01-2009'],
];

const days = [
  ['13-07', 'Ma', '8,00'],
  ['14-07', 'Di', '5,25'],
  ['15-07', 'Wo', '7,75'],
  ['16-07', 'Do', '8,00'],
  ['17-07', 'Vr', '8,75'],
  ['18-07', 'Za', '0,00'],
  ['19-07', 'Zo', '0,00'],
];

// [icon, project, type, day index, hours, description]
const hours = [
  ['alert', '0045', 'D', 4, '5,00', 'PHP-CGI i.c.m. suPHP'],
  ['clock', '0018', 'P', 4, '0,50', 'Logo aanpassen in loginschermen'],
  ['alert', '0405', 'SB', 4, '1,00', 'Installeren CentOs luke'],
  ['alert', '0264', 'C', 4, '0,50', 'Overleg Redunix'],
  ['alert', '0411', 'C', 4, '0,25', 'Telefonisch support'],
  ['alert', '0187', 'SB', 4, '0,25', 'E-mail probleem Frank'],
  ['alert', '4022', 'SB', 4, '0,25', 'Printer storing'],
  ['clock', '0412', 'WS', 4, '1,00', 'Bug fixing + overleg Twan'],
  ['clock', '0031', 'P', 3, '1,50', 'Testen + bug fixing wijzigingen ivm FireFox proo'],
  ['alert', '0264', 'SB', 3, '1,00', 'Formulieren'],
];

const contacts = [
  'Bert de Laat/ATSC', 'Boy de Laat/ATSC', 'Joost Vermeer/ATSC', 'Richard Beens/ATSC',
  'Rob Dekkers/ATSC', 'Teun Hoogendoorn/ATSC', 'Ton Verhagen/ATSC',
];

const panels = [
  ['star', 'Sametime Primary Contacts'],
  ['feed', 'Feeds'],
  ['calendar', 'Day-At-A-Glance'],
  ['activity', 'Activities'],
];

/* ---------- components ---------- */

const Logo = () => (
  <svg width="64" height="51" viewBox="0 0 64 51" aria-hidden="true">
    <path d="M4 42Q2 41 3 38L11 8Q13 1 20 1H59L54 6H23Q17 6 15 11L8 37Q7 41 4 42z" fill="#4680ad" />
    <path d="M60 3L50 37Q48 43 41 43H4L9 38H38Q43 38 45 33L52 9Q53 5 60 3z" fill="#000" />
    <path d="M18 23Q23 11 33 11T44 19Q41 31 30 31Q21 31 18 23z" fill="#4680ad" />
    <path d="M18 21Q23 11 33 11T44 19Q43 22 40 23H37Q36 28 31 28T25 22Q21 21 18 23z" fill="#000" />
    <path d="M27 18Q31 14 36 17Q33 21 30 20z" fill="#a9c2d7" />
  </svg>
);

const Arrow = ({ dir }) => {
  const d = { up: 'M0 3h4L2 1z', down: 'M0 1h4L2 3z', left: 'M3 0v4L1 2z', right: 'M1 0v4l2-2z' }[dir];
  return <svg width="4" height="4" viewBox="0 0 4 4" aria-hidden="true"><path d={d} fill="#000" /></svg>;
};

const ScrollBar = ({ before, thumb, after }) => (
  <ScrollTrack>
    <ScrollPart><Arrow dir="up" /></ScrollPart>
    <Space $grow={before} />
    <ScrollPart $grow={thumb} />
    <Space $grow={after} />
    <ScrollPart><Arrow dir="down" /></ScrollPart>
  </ScrollTrack>
);

const PanelHeader = ({ icon, title }) => (
  <PanelHead>
    <Icon name={icon} />
    <h3>{title}</h3>
    <PanelTools>
      <IconButton aria-label="Undock"><Icon name="undock" size={7} /></IconButton>
      <IconButton aria-label="Stack"><Icon name="stack" size={7} /></IconButton>
      <IconButton aria-label="Panel menu"><Icon name="panel" size={7} /></IconButton>
    </PanelTools>
  </PanelHead>
);

const WeekCols = () => (
  <colgroup>
    <col style={{ width: 40 }} />
    <col style={{ width: 17 }} />
    <col style={{ width: 47 }} />
    <col />
  </colgroup>
);

const CategoryRow = ({ indent, open, children }) => (
  <tr>
    <td colSpan="4">
      <Category $indent={indent} aria-expanded={open}><Twisty open={open} />{children}</Category>
    </td>
  </tr>
);

const WeekView = () => (
  <ViewPane>
    <ViewHead>
      <Gutter />
      <Clip>
        <WeekTable>
          <WeekCols />
          <thead>
            <tr>
              <HeadCell />
              <HeadCell>Week</HeadCell>
              <HeadCell $pad={6}>Begindatum</HeadCell>
              <HeadCell>Einddatum</HeadCell>
            </tr>
          </thead>
        </WeekTable>
      </Clip>
    </ViewHead>
    <PaneScroll>
      <Gutter />
      <Clip>
        <WeekTable>
          <WeekCols />
          <tbody>
            <CategoryRow indent={1} open>Boy de Laat/ATSC</CategoryRow>
            <CategoryRow indent={15} open>2009</CategoryRow>
            {weeks.map(([week, begin, end], i) => (
              <WeekRow key={i} $selected={i === 1}>
                <td><DocMark /></td>
                <td>{week}</td>
                <td>{begin}</td>
                <td>{end}</td>
              </WeekRow>
            ))}
            <CategoryRow indent={15} open={false}>2008</CategoryRow>
            <CategoryRow indent={15} open={false}>2007</CategoryRow>
          </tbody>
        </WeekTable>
      </Clip>
      <ScrollBar before={19} thumb={0} after={81} />
    </PaneScroll>
  </ViewPane>
);

const HourPreview = () => (
  <Preview>
    <PaneScroll>
      <Clip>
        <Facts>
          <dt>Medewerker:</dt><dd>Boy de Laat/ATSC</dd>
          <dt>Jaar:</dt><dd>2009</dd>
          <dt>Weeknummer:</dt><dd>29</dd>
          <dt>Periode:</dt><dd>13-07-2009 <span>t/m</span> 19-07-2009</dd>
        </Facts>
        <HourTable>
          <colgroup>
            <col style={{ width: 42 }} />
            <col style={{ width: 46 }} />
            {days.map(([date]) => <col key={date} style={{ width: 22 }} />)}
            <col style={{ width: 32 }} />
            <col style={{ width: 153 }} />
            <col />
          </colgroup>
          <thead>
            <tr>
              <HourHead colSpan="2" />
              {days.map(([date]) => <HourHead key={date}>{date}</HourHead>)}
              <HourHead colSpan="2" />
              <HourHead />
            </tr>
            <tr>
              <HourHead $pad={1}>Project</HourHead>
              <HourHead>Uursoort</HourHead>
              {days.map(([date, day]) => <HourHead key={date} $pad={10}>{day}</HourHead>)}
              <HourHead $pad={4}>Totaal</HourHead>
              <HourHead $pad={3}>Omschrijving</HourHead>
              <HourHead />
            </tr>
          </thead>
          <tbody>
            <SumRow>
              <td colSpan="2"><Category $indent={2}><Twisty open />Werkzaamheden</Category></td>
              {days.map(([date, , sum]) => <HourCell key={date} $pad={10}>{sum}</HourCell>)}
              <HourCell $right>37,75</HourCell>
              <td colSpan="2" />
            </SumRow>
            {hours.map(([icon, project, type, day, value, text], i) => (
              <tr key={i}>
                <td><ProjectCell><Icon name={icon} size={6} />{project}</ProjectCell></td>
                <HourCell $pad={17}>{type}</HourCell>
                {days.map(([date], d) => <HourCell key={date} $pad={10}>{d === day ? value : ''}</HourCell>)}
                <HourCell $right>{value}</HourCell>
                <HourCell $pad={9} colSpan="2">{text}</HourCell>
              </tr>
            ))}
            <tr>
              <td colSpan="11"><ProjectCell><Icon name="alert" size={6} /></ProjectCell></td>
            </tr>
          </tbody>
        </HourTable>
      </Clip>
      <ScrollBar before={0} thumb={79} after={21} />
    </PaneScroll>
    <BottomScroll>
      <ScrollTrack $horizontal>
        <ScrollPart><Arrow dir="left" /></ScrollPart>
        <ScrollPart $grow={88} $wide />
        <Space $grow={12} />
        <ScrollPart><Arrow dir="right" /></ScrollPart>
      </ScrollTrack>
      <Corner />
    </BottomScroll>
  </Preview>
);

const App = () => (
  <>
    <GlobalStyle />
    <Window>
      <TitleBar>
        <Icon name="notes" size={8} />
        <TitleText>Survey Center ATSC - IBM Lotus Notes</TitleText>
        <WindowButton aria-label="Minimize"><svg width="5" height="5"><path d="M0 4h3" stroke="#000" strokeWidth="1.5" /></svg></WindowButton>
        <WindowButton aria-label="Restore"><svg width="5" height="5"><path d="M1.5 1h3v2h-3zM.5 2.500h3v2h-3z" fill="none" stroke="#000" strokeWidth=".8" /></svg></WindowButton>
        <WindowButton aria-label="Close" $gap><svg width="5" height="5"><path d="M.5.5l4 4M4.500.5l-4 4" stroke="#000" /></svg></WindowButton>
      </TitleBar>

      <MenuBar>
        {menus.map((m) => <button key={m}><u>{m[0]}</u>{m.slice(1)}</button>)}
      </MenuBar>

      <TabBar>
        <WindowTab aria-label="Open windows"><Icon name="window" size={8} /></WindowTab>
        <Tab $active $width={43}>
          <TabButton><Icon name="home" />Home</TabButton>
          <TabClose aria-label="Close Home">×</TabClose>
        </Tab>
        <Tab $width={74}>
          <TabButton><Icon name="mail" />Boy de Laat - Mail</TabButton>
          <TabClose aria-label="Close Boy de Laat - Mail">×</TabClose>
        </Tab>
        <Tab $width={69}>
          <TabButton><Icon name="mail" />Helpdesk - Mail</TabButton>
          <TabClose aria-label="Close Helpdesk - Mail">×</TabClose>
        </Tab>
      </TabBar>

      <ToolBar>
        <Grip />
        <IconButton aria-label="New"><Icon name="create" /><Caret /></IconButton>
        <ToolGroup>
          {tools.map((t) => <IconButton key={t} aria-label={t}><Icon name={t} /></IconButton>)}
        </ToolGroup>
        <GlobalSearch>
          <IconButton type="button" aria-label="Search scope"><Icon name="ball" /><Caret /></IconButton>
          <input aria-label="Search" placeholder="Search Survey Center ATSC" />
          <IconButton type="button" aria-label="Go"><Icon name="search" size={8} /></IconButton>
        </GlobalSearch>
      </ToolBar>

      <Body>
        <Rail>
          <RailButton aria-label="Find"><Icon name="bino" /></RailButton>
          <RailRule />
          {rail.map(([name, menu], i) => (
            <RailButton key={i} $menu={menu} aria-label={name}><Icon name={name} />{menu && <Caret />}</RailButton>
          ))}
          <RailRule />
          <RailButton aria-label="Browser"><Icon name="world" /></RailButton>
          <RailRule />
          <RailButton aria-label="Designer"><Icon name="edit" /></RailButton>
          <RailButton aria-label="Help"><Icon name="help" /></RailButton>
          <RailButton aria-label="Start page"><Icon name="house" /></RailButton>
        </Rail>

        <Sidebar>
          <Brand>
            <Logo />
            <BrandName><span>SURVEY</span><span>CENTER</span></BrandName>
          </Brand>
          <ul>
            {tree.map(([level, label, state]) => (
              <TreeItem key={label} $level={level}>
                <Expander $shown={!!state} $open={state === 'open'} aria-label={`Toggle ${label}`} />
                <a href="#">{label}</a>
              </TreeItem>
            ))}
          </ul>
          <MainMenuLink href="#">Hoofd menu</MainMenuLink>
          <Server><Icon name="server" size={11} />R2D2</Server>
        </Sidebar>

        <Main>
          <ActionBar>
            {actions.map(([label, width], i) => (
              <Action key={label} $width={width}>{label}<KeyTip>{i + 1}</KeyTip></Action>
            ))}
          </ActionBar>
          <SearchTitle>
            <Icon name="search" size={8} />
            <h2>Search in View 'Weekstaat MW Op Jaar NOTES'</h2>
            <Indexed>Indexed</Indexed>
            <TitleAction aria-label="Help" style={{ marginLeft: 0 }}>?</TitleAction>
            <TitleAction aria-label="Close">×</TitleAction>
          </SearchTitle>
          <SearchRow>
            <label htmlFor="view-search">Search for</label>
            <input id="view-search" />
            <SearchButton type="button">Search</SearchButton>
            <a href="#">Search tips</a>
            <More type="button"><Arrow dir="right" />More</More>
          </SearchRow>
          <WeekView />
          <PreviewHandle aria-label="Preview">
            <svg width="6" height="4" viewBox="0 0 6 4"><path d="M0 4h6L3 0z" fill="#000" /></svg>
          </PreviewHandle>
          <HourPreview />
        </Main>

        <Splitter>
          <Space $grow={47} />
          <SplitGrip />
          <Space $grow={47} />
        </Splitter>

        <Contacts>
          <PanelHeader icon="sametime" title="Sametime Contacts" />
          <StatusMenu><Dot />Available<Caret /></StatusMenu>
          <ContactTools>
            <IconButton aria-label="Chat"><Icon name="chat" size={10} /></IconButton>
            <IconButton aria-label="Attach"><Icon name="clip" /></IconButton>
            <IconButton aria-label="Announce"><Icon name="horn" /></IconButton>
            <IconButton aria-label="Card"><Icon name="card" /></IconButton>
            <IconButton aria-label="Add contact"><Icon name="userAdd" size={10} /><Caret /></IconButton>
            <IconButton aria-label="Options"><Icon name="sheet" /></IconButton>
          </ContactTools>
          <FindRow>
            <Icon name="searchBlue" />
            <input aria-label="Find name" placeholder="Type to find name" />
          </FindRow>
          <ContactTree>
            <ContactGroup><Fold aria-label="Toggle Medewerkers" /><Icon name="group" />Medewerkers (7)</ContactGroup>
            {contacts.map((c, i) => <Contact key={c} $selected={i === 1}><Dot /><a href="#">{c}</a></Contact>)}
            <ContactGroup><Fold aria-label="Toggle Work" /><Icon name="groupWork" />Work (2/2)</ContactGroup>
            <Contact><Dot /><a href="#">Boy de Laat/ATSC</a></Contact>
            <Contact><Dot /><a href="#">Receptie/M30</a></Contact>
          </ContactTree>
          <PanelStack>
            {panels.map(([icon, title]) => <PanelHeader key={title} icon={icon} title={title} />)}
          </PanelStack>
        </Contacts>
      </Body>

      <StatusBar>
        <StatusRule $left />
        <Arrow dir="up" />
        <StatusRule />
        <Icon name="write" size={12} />
        <Icon name="cloud" size={12} />
        <IconButton>Boy <Arrow dir="up" /></IconButton>
      </StatusBar>
    </Window>
  </>
);

export default App;
